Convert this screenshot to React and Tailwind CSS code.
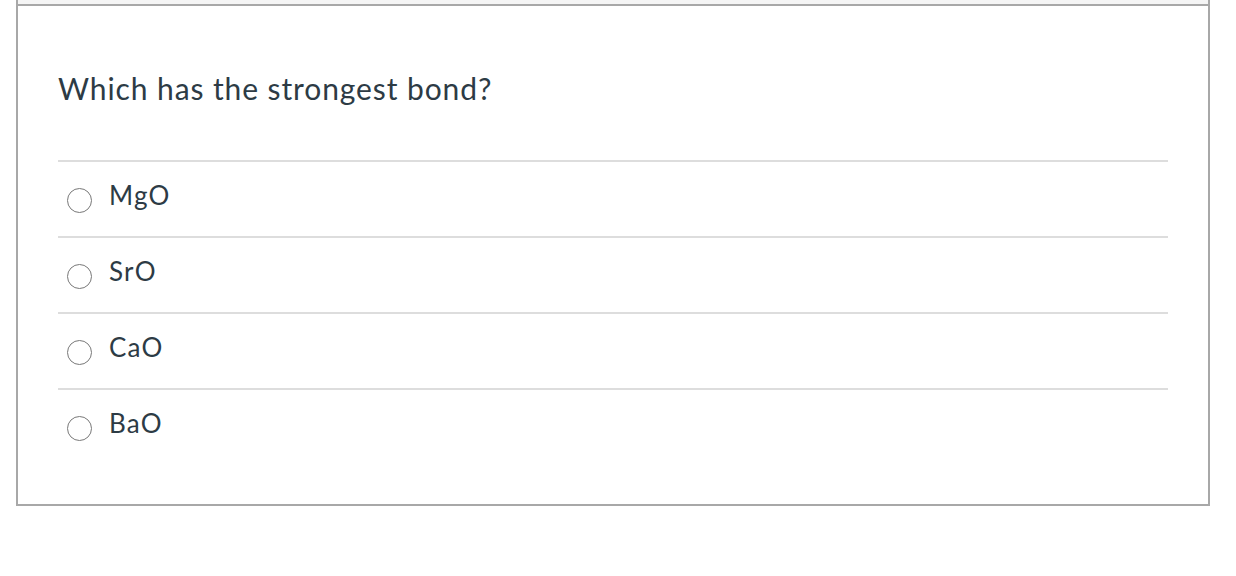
import React from "react";

const options = ["MgO", "SrO", "CaO", "BaO"];

function Radio() {
  return (
    <span className="mt-[26px] block h-[25px] w-[25px] shrink-0 rounded-full border-[1.5px] border-[#787878] bg-white" />
  );
}

export default function App() {
  return (
    <div className="min-h-screen bg-white font-['Lato','Liberation_Sans',sans-serif] text-[#2d3b45]">
      <div className="ml-4 w-[1194px] border-x-2 border-b-2 border-[#a8a8a8]">
        <div className="h-[6px] border-b-2 border-[#a8a8a8] bg-[#f5f5f5]" />
        <div className="px-10 pb-10">
          <div className="pt-[61px] pb-[51px] text-[30px] leading-[42px] tracking-[0.9px]">
            Which has the strongest bond?
          </div>
          {options.map((opt) => (
            <div key={opt} className="flex h-[76px] items-start gap-[17px] border-t-2 border-[#dddddd] pl-[9px]">
              <Radio />
              <span className="mt-[21px] text-[26px] leading-[24px] tracking-[1.2px]">{opt}</span>
            </div>
          ))}
        </div>
      </div>
    </div>
  );
}
